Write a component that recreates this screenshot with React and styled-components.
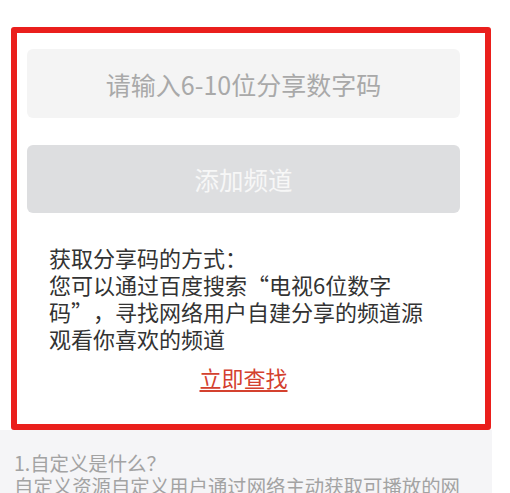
import React from "react";
import styled, { createGlobalStyle } from "styled-components";

const GlobalStyle = createGlobalStyle`
  html, body {
    margin: 0;
    padding: 0;
    background: #ffffff;
  }
  body {
    font-family: "Noto Sans CJK SC", "Noto Sans", sans-serif;
    overflow: hidden;
  }
`;

const Page = styled.div`
  width: 492px;
  height: 493px;
  display: flex;
  flex-direction: column;
`;

const TopRule = styled.div`
  margin-top: 1px;
  height: 2px;
  background: #e4e4e4;
`;

const Highlight = styled.section`
  margin: 26px 1px 0 11px;
  border: 6px solid #ea1f1c;
  border-radius: 3px;
  padding: 16px 25px 33px 10px;
  display: flex;
  flex-direction: column;
`;

const CodeInput = styled.input`
  height: 69px;
  border: none;
  border-radius: 6px;
  background: #f4f4f4;
  font-family: inherit;
  font-size: 25px;
  text-align: center;
  outline: none;
  padding: 0;
  &::placeholder {
    color: #a9a9a9;
  }
`;

const AddButton = styled.button`
  margin-top: 27px;
  height: 68px;
  border: none;
  border-radius: 6px;
  background: #dddee0;
  color: #f7f7f7;
  font-family: inherit;
  font-size: 24.5px;
  cursor: pointer;
`;

const Guide = styled.div`
  margin: 31px 0 0 22px;
  font-size: 22px;
  line-height: 27px;
  color: #333333;
`;

const Line = styled.div``;

// quotes take a full-width cell in the reference
const Quote = styled.span`
  display: inline-block;
  width: 1em;
  text-align: ${(p) => (p.$open ? "right" : "left")};
`;

const SearchLink = styled.a`
  margin-top: 12px;
  align-self: center;
  font-size: 22px;
  line-height: 27px;
  color: #d4412f;
  text-decoration: underline;
  text-underline-offset: 3px;
  cursor: pointer;
`;

const Faq = styled.div`
  flex: 1;
  background: #f5f5f7;
  padding: 21px 0 0 14px;
  font-size: 19.4px;
  line-height: 23px;
  color: #a3a3a3;
`;

export default function App() {
  return (
    <>
      <GlobalStyle />
      <Page>
        <TopRule />
        <Highlight>
          <CodeInput placeholder="请输入6-10位分享数字码" />
          <AddButton>添加频道</AddButton>
          <Guide>
            <Line>获取分享码的方式：</Line>
            <Line>
              您可以通过百度搜索<Quote $open>“</Quote>电视6位数字
            </Line>
            <Line>
              码<Quote>”</Quote>，寻找网络用户自建分享的频道源
            </Line>
            <Line>观看你喜欢的频道</Line>
          </Guide>
          <SearchLink>立即查找</SearchLink>
        </Highlight>
        <Faq>
          <Line>1.自定义是什么？</Line>
          <Line>自定义资源自定义用户通过网络主动获取可播放的网</Line>
        </Faq>
      </Page>
    </>
  );
}
